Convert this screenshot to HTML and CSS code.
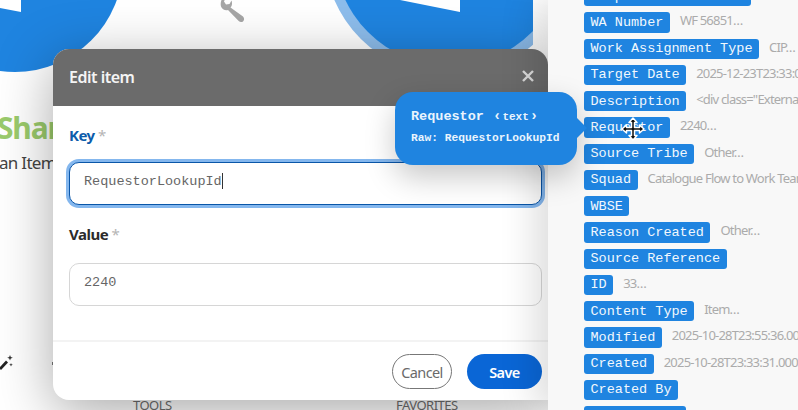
FILE: index.html
```html
<!DOCTYPE html>
<html lang="en">
<head>
<meta charset="utf-8">
<title>Edit item</title>
<link rel="stylesheet" href="styles.css">
</head>
<body>
<div class="page">
  <div class="canvas">
    <div class="circle circle-left"></div>
    <div class="circle circle-right"></div>
    <svg class="notch notch-left" width="21" height="12" viewBox="0 0 21 12"><polygon points="0,0 21,0 21,12 0,8" fill="#fff"/></svg>
    <svg class="notch notch-right" width="60" height="12" viewBox="0 0 60 12"><polygon points="0,0 60,0 60,12" fill="#fff"/></svg>
    <svg class="wrench" width="26" height="26" viewBox="0 0 26 26"><path d="M3 1 L7 -1 L5 3.500 L7 6.500 L10.500 6 L12.500 2.500 C13.500 5.500 13 8 11.500 9.500 L24 18.500 C25.500 20 25.300 22 24.200 23.200 C23 24.400 21 24.400 19.700 23 L9 12 C6 12.800 3 11 2 8.500 C1.300 6 1.800 3 3 1 Z" fill="#a6a6a6"/></svg>
    <div class="brand">Shar</div>
    <div class="brand-sub">an Item</div>
    <svg class="wand" width="16" height="16" viewBox="0 0 16 16"><path d="M0 14 L7 6.500 L9 8.500 L2 16 Z" fill="#222"/><path d="M11 1 l.8 2 2 .8 -2 .8 -.8 2 -.8 -2 -2 -.8 2 -.8z M12 9 l.5 1.300 1.300 .5 -1.300 .5 -.5 1.300 -.5 -1.300 -1.300 -.5 1.300 -.5z" fill="#333"/></svg>
    <div class="tick"></div>
    <div class="dock dock-tools">TOOLS</div>
    <div class="dock dock-favorites">FAVORITES</div>
  </div>

  <section class="modal">
    <header class="modal-head">
      <h2 class="modal-title">Edit item</h2>
      <svg class="modal-close" width="12" height="12" viewBox="0 0 12 12"><path d="M1 1 L11 11 M11 1 L1 11" stroke="#d8d8d8" stroke-width="2.400" fill="none"/></svg>
    </header>
    <div class="modal-body">
      <div class="field">
        <div class="label label-active">Key <span class="req">*</span></div>
        <div class="input input-focus"><span>RequestorLookupId</span><i class="caret"></i></div>
      </div>
      <div class="field field-value">
        <div class="label">Value <span class="req">*</span></div>
        <div class="input"><span>2240</span></div>
      </div>
    </div>
    <footer class="modal-foot">
      <button class="btn btn-cancel">Cancel</button>
      <button class="btn btn-save">Save</button>
    </footer>
  </section>

  <aside class="panel">
    <div class="rows">
      <div class="row"><span class="tag">Completion Comments</span></div>
      <div class="row"><span class="tag">WA Number</span><span class="val">WF 56851…</span></div>
      <div class="row"><span class="tag">Work Assignment Type</span><span class="val">CIP…</span></div>
      <div class="row"><span class="tag">Target Date</span><span class="val">2025-12-23T23:33:00.000Z…</span></div>
      <div class="row"><span class="tag">Description</span><span class="val">&lt;div class="ExternalClass…</span></div>
      <div class="row"><span class="tag">Requestor</span><span class="val">2240…</span></div>
      <div class="row"><span class="tag">Source Tribe</span><span class="val">Other…</span></div>
      <div class="row"><span class="tag">Squad</span><span class="val">Catalogue Flow to Work Team…</span></div>
      <div class="row"><span class="tag">WBSE</span></div>
      <div class="row"><span class="tag">Reason Created</span><span class="val">Other…</span></div>
      <div class="row"><span class="tag">Source Reference</span></div>
      <div class="row"><span class="tag">ID</span><span class="val">33…</span></div>
      <div class="row"><span class="tag">Content Type</span><span class="val">Item…</span></div>
      <div class="row"><span class="tag">Modified</span><span class="val">2025-10-28T23:55:36.000Z…</span></div>
      <div class="row"><span class="tag">Created</span><span class="val">2025-10-28T23:33:31.000Z…</span></div>
      <div class="row"><span class="tag">Created By</span></div>
      <div class="row"><span class="tag">Modified By</span></div>
    </div>
  </aside>

  <div class="tooltip">
    <div class="tip-title">Requestor <span class="tip-type"><b class="tip-bracket">‹</b>text<b class="tip-bracket">›</b></span></div>
    <div class="tip-raw">Raw: RequestorLookupId</div>
  </div>

  <svg class="cursor" width="24" height="24" viewBox="0 0 24 24"><path d="M12 1 L16 5.500 H13.500 V10.500 H18.500 V8 L23 12 L18.500 16 V13.500 H13.500 V18.500 H16 L12 23 L8 18.500 H10.500 V13.500 H5.500 V16 L1 12 L5.500 8 V10.500 H10.500 V5.500 H8 Z" fill="#111" stroke="#fff" stroke-width="1.500" stroke-linejoin="round"/></svg>
</div>
</body>
</html>
```
FILE: styles.css
```css
* { box-sizing: border-box; }
html, body { margin: 0; padding: 0; }
body { width: 798px; height: 410px; overflow: hidden; background: #fff; font-family: "Noto Sans", "Open Sans", sans-serif; }
.page { position: relative; width: 798px; height: 410px; overflow: hidden; background: #fff; }

.canvas { position: absolute; left: 0; top: 0; width: 533px; height: 410px; overflow: hidden; background: #fff; }
.circle { position: absolute; border-radius: 50%; background: #1f84e0; }
.circle-left { left: -93px; top: -144px; width: 216px; height: 216px; }
.circle-right { left: 334px; top: -166px; width: 232px; height: 232px; box-shadow: 0 0 0 10px #8dbdec; }
.notch { position: absolute; top: 0; }
.notch-left { left: 0; }
.notch-right { left: 400px; }
.wrench { position: absolute; left: 219px; top: -2px; }
.brand { position: absolute; left: -3px; top: 107px; font-size: 30px; line-height: 42px; font-weight: 700; color: #9bcb6c; letter-spacing: -1.200px; }
.brand-sub { position: absolute; left: -1px; top: 151px; font-size: 17px; line-height: 24px; color: #444; letter-spacing: -.7px; }
.wand { position: absolute; left: -1px; top: 354px; }
.tick { position: absolute; left: 52px; top: 362px; width: 1px; height: 3px; background: #777; }
.dock { position: absolute; top: 396px; font-size: 13px; line-height: 18px; color: #6d6d6d; letter-spacing: -.5px; }
.dock-tools { left: 133px; }
.dock-favorites { left: 396px; }

.modal { position: absolute; left: 53px; top: 49px; width: 495px; height: 351px; display: flex; flex-direction: column; background: #fff; border-radius: 16px 16px 0 16px; box-shadow: 0 12px 55px rgba(0,0,0,.34); overflow: hidden; }
.modal-head { flex: 0 0 57px; display: flex; align-items: center; justify-content: space-between; padding: 0 14px 0 16px; background: #6b6b6b; }
.modal-title { margin: 0 0 2px; font-size: 16px; font-weight: 600; color: #f4f4f4; letter-spacing: -.5px; }
.modal-close { margin: 0 0 3px; }
.modal-body { flex: 1; display: flex; flex-direction: column; gap: 17px; padding: 17px 6px 0 16px; }
.field { display: flex; flex-direction: column; gap: 15px; }
.field-value { gap: 17px; }
.label { font-size: 15px; line-height: 24px; font-weight: 700; color: #2b2b2b; letter-spacing: -.5px; }
.label-active { color: #0d5cab; }
.req { color: #b5b5b5; font-weight: 400; }
.input { height: 43px; display: flex; align-items: center; padding: 0 14px 5px; border: 1px solid #d6d6d6; border-radius: 10px; font-family: "Liberation Mono", monospace; font-size: 13.500px; color: #666; background: #fff; }
.input-focus { border-color: #0a56a8; box-shadow: 0 0 0 3px #84b7ee; }
.caret { width: 1px; height: 16px; background: #333; }
.modal-foot { flex: 0 0 60px; display: flex; justify-content: flex-end; align-items: flex-start; gap: 15px; padding: 12px 6px 0 0; border-top: 2px solid #f3f3f3; }
.btn { height: 35px; border-radius: 18px; font-family: "Noto Sans", sans-serif; font-size: 14.500px; letter-spacing: -.6px; padding: 0; }
.btn-cancel { width: 60px; background: #fff; border: 1px solid #777; color: #6a6a6a; }
.btn-save { width: 75px; background: #0a66d6; border: 0; color: #fff; font-weight: 600; }

.panel { position: absolute; left: 548px; top: 0; width: 250px; height: 410px; overflow: hidden; background: #f8f8f8; box-shadow: -12px 0 35px rgba(0,0,0,.14); }
.rows { display: flex; flex-direction: column; gap: 6px; margin-top: -14px; padding-left: 36px; }
.row { display: flex; align-items: flex-start; gap: 10px; white-space: nowrap; }
.tag { flex: none; height: 20.250px; padding: 0 6.500px; display: flex; align-items: center; background: #1f84e0; color: #f2f8fd; border-radius: 3px; font-family: "Liberation Mono", monospace; font-size: 13.500px; }
.val { font-size: 13px; line-height: 16px; color: #ababab; letter-spacing: -.8px; }

.tooltip { position: absolute; left: 395px; top: 92px; width: 182px; height: 73px; padding: 16px; background: #1f84e0; border-radius: 18px; color: #eaf4fd; font-family: "Liberation Mono", monospace; font-weight: 700; box-shadow: 0 12px 30px rgba(0,0,0,.22); }
.tooltip::after { content: ""; position: absolute; right: -10px; top: 26px; border-left: 10px solid #1f84e0; border-top: 10px solid transparent; border-bottom: 10px solid transparent; }
.tip-title { font-size: 13.500px; line-height: 16px; }
.tip-type { font-size: 11px; }
.tip-bracket { font-size: 14px; margin: 0 1px; }
.tip-raw { margin-top: 6px; font-size: 11.250px; line-height: 14px; }

.cursor { position: absolute; left: 621px; top: 117px; }
```
